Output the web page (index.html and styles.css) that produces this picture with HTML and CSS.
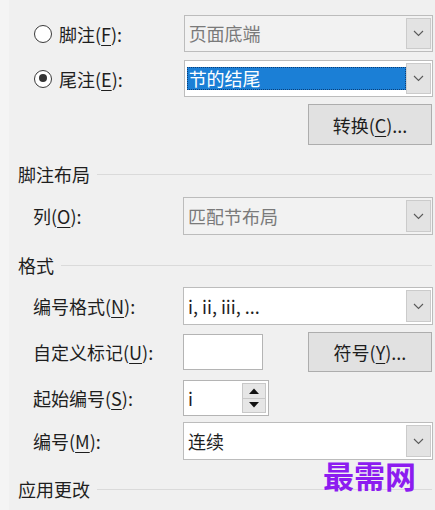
FILE: index.html
```html
<!DOCTYPE html>
<html lang="zh-CN">
<head>
<meta charset="utf-8">
<link rel="stylesheet" href="styles.css">
</head>
<body>
<div class="dialog">
  <div class="row r1">
    <label class="lbl radio-lbl"><span class="radio"></span>脚注(<u>F</u>):</label>
    <div class="combo disabled"><span class="val">页面底端</span><span class="drop"><svg width="11" height="7" viewBox="0 0 11 7"><path d="M1 1 L5.5 5.5 L10 1" fill="none" stroke="#5a5a5a" stroke-width="1.1"/></svg></span></div>
  </div>
  <div class="row r2">
    <label class="lbl radio-lbl"><span class="radio on"></span>尾注(<u>E</u>):</label>
    <div class="combo white"><span class="val sel">节的结尾</span><span class="drop"><svg width="11" height="7" viewBox="0 0 11 7"><path d="M1 1 L5.5 5.5 L10 1" fill="none" stroke="#5a5a5a" stroke-width="1.1"/></svg></span></div>
  </div>
  <div class="row r3">
    <button class="btn">转换(<u>C</u>)...</button>
  </div>
  <div class="heading h1"><span>脚注布局</span><i></i></div>
  <div class="row r4">
    <label class="lbl">列(<u>O</u>):</label>
    <div class="combo disabled"><span class="val">匹配节布局</span><span class="drop"><svg width="11" height="7" viewBox="0 0 11 7"><path d="M1 1 L5.5 5.5 L10 1" fill="none" stroke="#5a5a5a" stroke-width="1.1"/></svg></span></div>
  </div>
  <div class="heading h2"><span>格式</span><i></i></div>
  <div class="row r5">
    <label class="lbl">编号格式(<u>N</u>):</label>
    <div class="combo white"><span class="val dark">i, ii, iii, ...</span><span class="drop"><svg width="11" height="7" viewBox="0 0 11 7"><path d="M1 1 L5.5 5.5 L10 1" fill="none" stroke="#5a5a5a" stroke-width="1.1"/></svg></span></div>
  </div>
  <div class="row r6">
    <label class="lbl">自定义标记(<u>U</u>):</label>
    <div class="textbox"></div>
    <button class="btn sym">符号(<u>Y</u>)...</button>
  </div>
  <div class="row r7">
    <label class="lbl">起始编号(<u>S</u>):</label>
    <div class="spinner">
      <span class="spin-val">i</span>
      <span class="spin-btns">
        <span class="sb"><svg width="10" height="6" viewBox="0 0 10 6"><path d="M0 6 L5 0.5 L10 6 Z" fill="#111"/></svg></span>
        <span class="sb"><svg width="10" height="6" viewBox="0 0 10 6"><path d="M0 0 L5 5.5 L10 0 Z" fill="#111"/></svg></span>
      </span>
    </div>
  </div>
  <div class="row r8">
    <label class="lbl">编号(<u>M</u>):</label>
    <div class="combo white"><span class="val dark">连续</span><span class="drop"><svg width="11" height="7" viewBox="0 0 11 7"><path d="M1 1 L5.5 5.5 L10 1" fill="none" stroke="#5a5a5a" stroke-width="1.1"/></svg></span></div>
  </div>
  <div class="heading h3"><span>应用更改</span><i></i></div>
  <div class="watermark">最需网</div>
</div>
</body>
</html>
```

FILE: styles.css
```css
html, body {
  margin: 0;
  padding: 0;
  background: #f0f0f0;
}
body {
  width: 435px;
  height: 510px;
  overflow: hidden;
  font-family: "Noto Sans CJK SC", "Noto Sans", sans-serif;
  font-size: 18px;
  color: #1e1e1e;
}
.dialog {
  position: relative;
  height: 510px;
  padding: 15px 2px 0 0;
  box-sizing: border-box;
  border-left: 9px solid #f4f4f4;
}
.row {
  display: flex;
  align-items: center;
}
.lbl {
  width: 148px;
  padding-left: 24px;
  display: flex;
  align-items: center;
  line-height: 1;
  white-space: nowrap;
}
.radio-lbl { padding-left: 25px; }
u { text-decoration-thickness: 1px; text-underline-offset: 3px; }
.radio {
  width: 16px;
  height: 16px;
  border: 1.5px solid #3a3a3a;
  border-radius: 50%;
  background: #fff;
  margin-right: 7px;
  flex: none;
  position: relative;
  box-sizing: border-box;
  width: 18px;
  height: 18px;
}
.radio.on::after {
  content: "";
  position: absolute;
  left: 3.5px; top: 3.5px;
  width: 8px; height: 8px;
  border-radius: 50%;
  background: #333;
}
.r1 { margin-top: 0; height: 37px; }
.r2 { margin-top: 8px; height: 37px; }
.r3 { margin-top: 7px; height: 41px; justify-content: flex-end; }
.r4 { margin-top: 13px; height: 38px; }
.r5 { margin-top: 12px; height: 38px; }
.r6 { margin-top: 7px; height: 40px; }
.r7 { margin-top: 8px; height: 36px; }
.r8 { margin-top: 6px; height: 38px; }

.combo {
  width: 250px;
  height: 100%;
  box-sizing: border-box;
  border: 1px solid #bcbcbc;
  display: flex;
  align-items: center;
  padding: 2px 1px 2px 2px;
  background: #f2f2f2;
  margin-left: 2px;
}
.combo.white { background: #fff; }
.val {
  flex: 1;
  color: #7a7a7a;
  padding-left: 2px;
  line-height: 23px;
  height: 23px;
  white-space: nowrap;
}
.val.dark { color: #1e1e1e; }
.val.sel {
  background: #1b7fd6;
  color: #fff;
  outline: 1px dotted #0c3f78;
  outline-offset: -1px;
}
.drop {
  width: 25px;
  height: 100%;
  box-sizing: border-box;
  background: #e3e3e3;
  border: 1px solid #cbcbcb;
  display: flex;
  align-items: center;
  justify-content: center;
  flex: none;
}
.btn {
  width: 124px;
  height: 100%;
  box-sizing: border-box;
  background: #e1e1e1;
  border: 1px solid #adadad;
  font: inherit;
  color: #1e1e1e;
  padding: 0;
  margin: 0 1px 0 0;
}
.btn.sym { margin-left: auto; }
.textbox {
  width: 80px;
  height: 36px;
  box-sizing: border-box;
  background: #fff;
  border: 1px solid #b4b4b4;
  margin-left: 2px;
}
.spinner {
  width: 86px;
  height: 100%;
  box-sizing: border-box;
  background: #fff;
  border: 1px solid #b4b4b4;
  margin-left: 2px;
  display: flex;
  align-items: center;
  padding: 2px 2px 2px 4px;
}
.spin-val { flex: 1; }
.spin-btns {
  display: flex;
  flex-direction: column;
  width: 24px;
  height: 100%;
  border: 1px solid #c8c8c8;
  box-sizing: border-box;
}
.sb {
  flex: 1;
  background: #e6e6e6;
  display: flex;
  align-items: center;
  justify-content: center;
}
.sb + .sb { border-top: 1px solid #c8c8c8; }

.heading {
  display: flex;
  align-items: center;
  height: 20px;
  padding-left: 9px;
  line-height: 1;
}
.heading i {
  flex: 1;
  height: 1px;
  background: #dadada;
  margin-left: 7px;
  margin-right: 1px;
}
.h1 { margin-top: 19px; }
.h2 { margin-top: 20px; }
.h3 { margin-top: 19px; }

.watermark {
  position: absolute;
  left: 314px;
  top: 459px;
  font-size: 31px;
  font-weight: 700;
  color: #8c1cf0;
  line-height: 1;
  font-family: "Noto Sans CJK SC", serif;
}
```
